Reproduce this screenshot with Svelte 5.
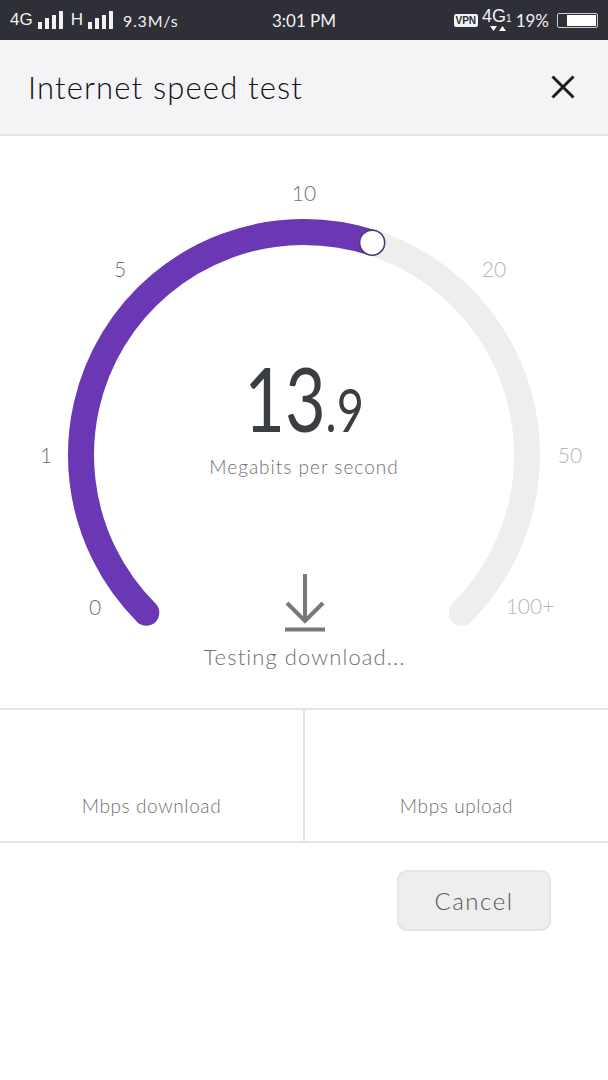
<script>
  const r = 223;
  const cx = 304;
  const cy = 319;

  function point(deg) {
    const a = (deg * Math.PI) / 180;
    return [cx + r * Math.cos(a), cy + r * Math.sin(a)];
  }

  function arc(from, to) {
    const [x1, y1] = point(from);
    const [x2, y2] = point(to);
    const large = to - from > 180 ? 1 : 0;
    return `M${x1} ${y1} A${r} ${r} 0 ${large} 1 ${x2} ${y2}`;
  }

  const start = 135;
  const end = 405;
  const needle = 287.8;
  const [tx, ty] = point(needle);

  const ticks = [
    { label: "0", x: 95, y: 470, on: true },
    { label: "1", x: 46, y: 318, on: true },
    { label: "5", x: 120, y: 132, on: true },
    { label: "10", x: 304, y: 56, on: true },
    { label: "20", x: 494, y: 132, on: false },
    { label: "50", x: 570, y: 318, on: false },
    { label: "100+", x: 530, y: 469, on: false },
  ];

  const signal = [7, 11, 14, 18];
</script>

<div class="screen">
  <div class="status">
    <div class="status-left">
      <span class="net">4G</span>
      <span class="bars">{#each signal as h}<i style="height: {h}px"></i>{/each}</span>
      <span class="net h">H</span>
      <span class="bars">{#each signal as h}<i style="height: {h}px"></i>{/each}</span>
      <span class="rate">9.3M/s</span>
    </div>
    <div class="clock">3:01 PM</div>
    <div class="status-right">
      <span class="vpn">VPN</span>
      <span class="net-right">4G<sub>1</sub>
        <svg class="arrows" width="16" height="7" viewBox="0 0 16 7"><path d="M0 1h7L3.5 6zM9 6h7l-3.5-5z" fill="#fff" /></svg>
      </span>
      <span class="pct">19%</span>
      <span class="battery"><i></i></span>
    </div>
  </div>

  <header class="head">
    <h1>Internet speed test</h1>
    <svg class="close" width="26" height="26" viewBox="0 0 26 26">
      <path d="M2.5 2.5l21 21M23.5 2.5l-21 21" stroke="#1d1d20" stroke-width="3" fill="none" />
    </svg>
  </header>

  <section class="gauge">
    <svg class="dial" width="608" height="572" viewBox="0 0 608 572">
      <path d={arc(start, end)} class="track" />
      <path d={arc(start, needle)} class="fill" />
      <circle cx={tx} cy={ty} r="12.5" class="thumb" />
      {#each ticks as t}
        <text x={t.x} y={t.y} class="tick" class:on={t.on} text-anchor="middle" dominant-baseline="central">{t.label}</text>
      {/each}
    </svg>
    <div class="readout">
      <div class="value"><span class="big">13</span><span class="small">.9</span></div>
      <div class="unit">Megabits per second</div>
    </div>
    <div class="progress">
      <svg width="42" height="60" viewBox="0 0 42 60">
        <path d="M21 1v47M3 30l18 18 18-18" stroke="#77787c" stroke-width="4" fill="none" />
        <path d="M1 56.500h40" stroke="#77787c" stroke-width="4" fill="none" />
      </svg>
      <div class="testing">Testing download...</div>
    </div>
  </section>

  <section class="results">
    <div class="cell">Mbps download</div>
    <div class="cell">Mbps upload</div>
  </section>

  <div class="actions">
    <button class="cancel">Cancel</button>
  </div>
</div>

<style>
  :global(body) {
    margin: 0;
    background: #fff;
  }

  .screen {
    width: 608px;
    height: 1080px;
    overflow: hidden;
    font-family: Lato, "Open Sans", sans-serif;
    font-weight: 300;
    background: #fff;
  }

  .status {
    height: 40px;
    background: #2f2f37;
    color: #f2f2f2;
    display: grid;
    grid-template-columns: 1fr auto 1fr;
    align-items: center;
    padding: 0 10px;
    box-sizing: border-box;
  }

  .status-left,
  .status-right {
    display: flex;
    align-items: center;
  }

  .status-right {
    justify-content: flex-end;
  }

  .net {
    font-family: "Liberation Sans", sans-serif;
    font-size: 17px;
    font-weight: 400;
  }

  .net.h {
    margin-left: 8px;
  }

  .bars {
    display: inline-flex;
    align-items: flex-end;
    gap: 3px;
    margin-left: 5px;
    height: 18px;
  }

  .bars i {
    display: block;
    width: 4px;
    background: #f2f2f2;
  }

  .rate {
    font-size: 16px;
    font-weight: 400;
    margin-left: 10px;
    letter-spacing: 0.8px;
  }

  .clock {
    font-size: 17px;
    font-weight: 400;
  }

  .vpn {
    background: #f4f4f4;
    color: #2f2f37;
    font-family: "Liberation Sans", sans-serif;
    font-size: 10px;
    font-weight: 700;
    line-height: 13px;
    padding: 0 2px;
    border-radius: 2px;
  }

  .net-right {
    position: relative;
    font-family: "Liberation Sans", sans-serif;
    font-size: 18px;
    font-weight: 400;
    line-height: 22px;
    margin: -6px 0 0 4px;
  }

  .net-right sub {
    font-size: 10px;
    vertical-align: baseline;
  }

  .arrows {
    position: absolute;
    left: 8px;
    top: 20px;
  }

  .pct {
    font-size: 17px;
    font-weight: 400;
    margin-left: 4px;
  }

  .battery {
    position: relative;
    width: 41px;
    height: 15px;
    margin: 0 0 0 8px;
    border: 1px solid #cfcfcf;
    border-radius: 2px;
    box-sizing: border-box;
    display: flex;
    justify-content: flex-end;
    align-items: stretch;
    padding: 1px;
  }

  .battery i {
    display: block;
    width: 29px;
    background: #fff;
  }

  .head {
    height: 96px;
    box-sizing: border-box;
    background: #f4f4f6;
    border-bottom: 2px solid #e6e6e8;
    display: flex;
    align-items: center;
    justify-content: space-between;
    padding: 0 32px 0 28px;
  }

  .head h1 {
    margin: 0;
    font-size: 31px;
    font-weight: 300;
    letter-spacing: 1.15px;
    color: #111114;
  }

  .gauge {
    position: relative;
    height: 572px;
  }

  .dial {
    position: absolute;
    inset: 0;
  }

  .track,
  .fill {
    fill: none;
    stroke-width: 26;
    stroke-linecap: round;
  }

  .track {
    stroke: #eeeeee;
  }

  .fill {
    stroke: #6a37b5;
  }

  .thumb {
    fill: #fff;
    stroke: #4b3a78;
    stroke-width: 1.5;
  }

  .tick {
    font-size: 21px;
    fill: #b6b6b6;
  }

  .tick.on {
    fill: #6e6f73;
  }

  .readout {
    position: absolute;
    top: 215px;
    left: 0;
    right: 0;
    text-align: center;
  }

  /* the reference digits are much narrower than Lato's */
  .value {
    color: #3a3d42;
    line-height: 92px;
    height: 92px;
    transform: scaleX(0.78);
  }

  .big {
    font-size: 90px;
    font-weight: 400;
  }

  .small {
    font-size: 60px;
    font-weight: 400;
  }

  .unit {
    font-size: 19px;
    color: #6e6f73;
    letter-spacing: 1px;
    margin-top: 12px;
  }

  .progress {
    position: absolute;
    top: 437px;
    left: 1px;
    right: 0;
    display: flex;
    flex-direction: column;
    align-items: center;
  }

  .progress svg {
    display: block;
  }

  .testing {
    font-size: 22px;
    color: #6e6f73;
    letter-spacing: 1.1px;
    margin-top: 10px;
  }

  .results {
    display: grid;
    grid-template-columns: 305px 1fr;
    height: 135px;
    box-sizing: border-box;
    border-top: 2px solid #e4e4e6;
    border-bottom: 2px solid #e4e4e6;
  }

  .cell {
    display: flex;
    align-items: flex-end;
    justify-content: center;
    padding-bottom: 24px;
    font-size: 19px;
    color: #6e6f73;
    letter-spacing: 0.6px;
  }

  .cell:first-child {
    border-right: 2px solid #e4e4e6;
  }

  .actions {
    display: flex;
    justify-content: flex-end;
    padding: 27px 57px 0 0;
  }

  .cancel {
    width: 154px;
    height: 61px;
    border: 2px solid #e4e4e6;
    border-radius: 10px;
    background: #eeeeee;
    color: #55565a;
    font-family: inherit;
    font-size: 24px;
    font-weight: 300;
    letter-spacing: 1.5px;
  }
</style>
